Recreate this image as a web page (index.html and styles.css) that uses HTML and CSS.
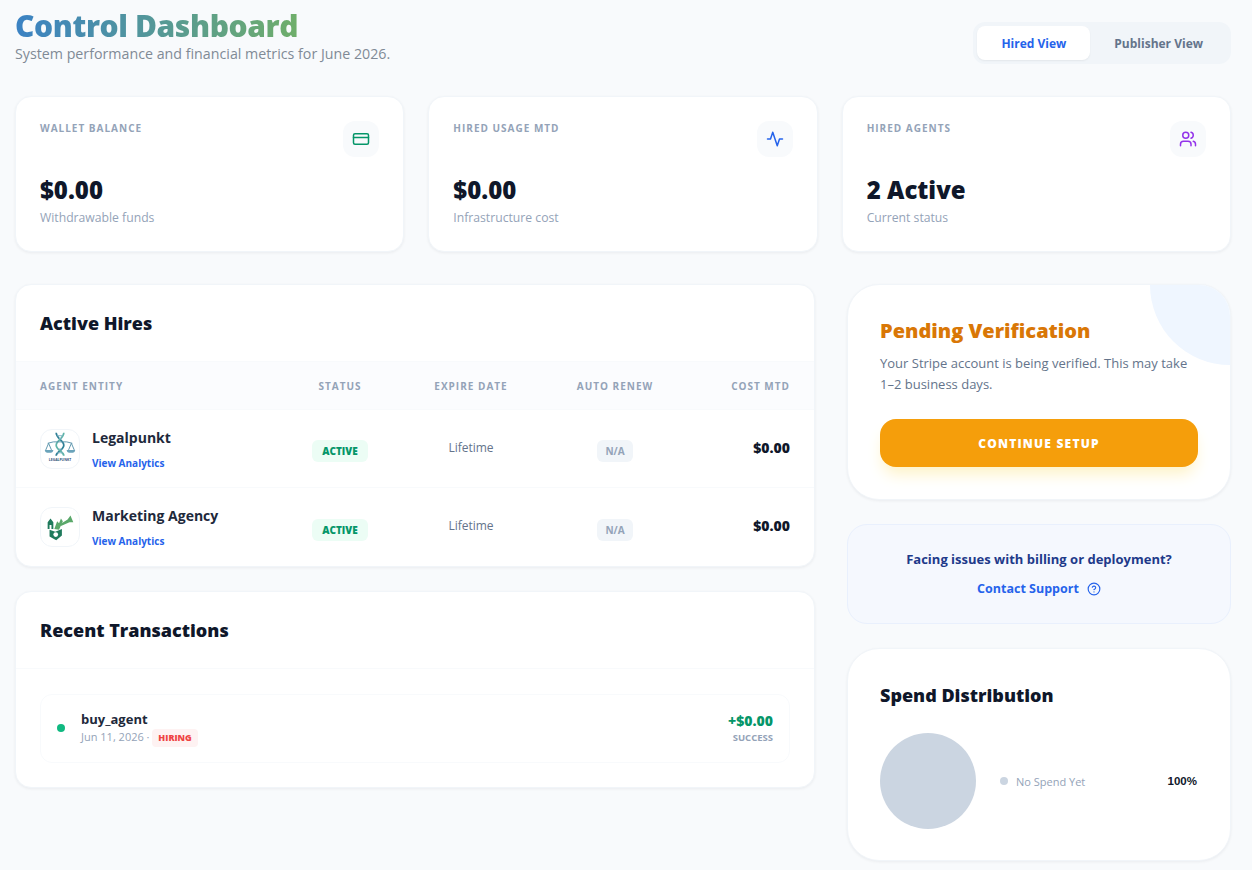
FILE: index.html
```html
<!DOCTYPE html>
<html lang="en">
  <head>
    <meta charset="UTF-8" />
    <meta name="viewport" content="width=device-width, initial-scale=1.0" />
    <title>Control Dashboard</title>
    <link rel="stylesheet" href="styles.css">
  </head>
  <body>
    <div class="page">
      <header class="top">
        <div>
          <h1 class="page-title">Control Dashboard</h1>
          <p class="page-sub">System performance and financial metrics for June 2026.</p>
        </div>
        <div class="toggle">
          <button class="toggle-btn active">Hired View</button>
          <button class="toggle-btn">Publisher View</button>
        </div>
      </header>

      <section class="stats">
        <div class="stat">
          <div class="stat-top">
            <span class="stat-label">Wallet Balance</span>
            <span class="stat-icon green">
              <svg viewBox="0 0 24 24"><rect x="2" y="5" width="20" height="14" rx="2"/><line x1="2" y1="10" x2="22" y2="10"/></svg>
            </span>
          </div>
          <div class="stat-value">$0.00</div>
          <div class="stat-sub">Withdrawable funds</div>
        </div>
        <div class="stat">
          <div class="stat-top">
            <span class="stat-label">Hired Usage MTD</span>
            <span class="stat-icon blue">
              <svg viewBox="0 0 24 24"><polyline points="22 12 18 12 15 21 9 3 6 12 2 12"/></svg>
            </span>
          </div>
          <div class="stat-value">$0.00</div>
          <div class="stat-sub">Infrastructure cost</div>
        </div>
        <div class="stat">
          <div class="stat-top">
            <span class="stat-label">Hired Agents</span>
            <span class="stat-icon purple">
              <svg viewBox="0 0 24 24"><path d="M16 21v-2a4 4 0 0 0-4-4H6a4 4 0 0 0-4 4v2"/><circle cx="9" cy="7" r="4"/><path d="M22 21v-2a4 4 0 0 0-3-3.87"/><path d="M16 3.13a4 4 0 0 1 0 7.75"/></svg>
            </span>
          </div>
          <div class="stat-value">2 Active</div>
          <div class="stat-sub">Current status</div>
        </div>
      </section>

      <div class="columns">
        <main class="left">
          <section class="panel">
            <h2 class="panel-title">Active Hires</h2>
            <table class="hires">
              <colgroup>
                <col class="col-agent"><col class="col-status"><col class="col-expire"><col class="col-renew"><col>
              </colgroup>
              <thead>
                <tr>
                  <th class="text-left">Agent Entity</th>
                  <th>Status</th>
                  <th>Expire Date</th>
                  <th>Auto Renew</th>
                  <th class="text-right">Cost MTD</th>
                </tr>
              </thead>
              <tbody>
                <tr>
                  <td>
                    <div class="agent">
                      <span class="agent-logo">
                        <svg viewBox="0 0 40 40">
                          <path class="dna-a" d="M16 3c0 6 8 8 8 13s-8 7-8 11"/>
                          <path class="dna-b" d="M24 3c0 6-8 8-8 13s8 7 8 11"/>
                          <path class="rung" d="M17 6h6M19 9h3M19 20h3M17 24h6"/>
                          <path class="beam" d="M7 14l6-1.500h14l6 1.500M8 14l-3 7M8 14l3 7M32 14l-3 7M32 14l3 7"/>
                          <path class="pan" d="M4 21a4.500 3 0 0 0 9 0zM27 21a4.500 3 0 0 0 9 0z"/>
                          <text class="logo-word" x="20" y="33">LEGALPUNKT</text>
                        </svg>
                      </span>
                      <div>
                        <div class="agent-name">Legalpunkt</div>
                        <a class="agent-link">View Analytics</a>
                      </div>
                    </div>
                  </td>
                  <td class="text-center badge-cell"><span class="badge badge-active">ACTIVE</span></td>
                  <td class="text-center expire">Lifetime</td>
                  <td class="text-center badge-cell"><span class="badge badge-na">N/A</span></td>
                  <td class="text-right cost">$0.00</td>
                </tr>
                <tr>
                  <td>
                    <div class="agent">
                      <span class="agent-logo">
                        <svg viewBox="0 0 40 40">
                          <path class="mega" d="M7 15l3-4 3 4v7h-2v-4H9v4H7z"/>
                          <path class="mega-light" d="M14 22l3-8 2 2 2-5 2 3-4 9z"/>
                          <path class="mega-light" d="M20 17l8-5 3-4 3 7-4 0-9 4z"/>
                          <path class="mega" d="M9 23l6 2 7-3v7l-6 5-7-4z"/>
                          <circle class="mega-dot" cx="15.500" cy="28" r="2.500"/>
                        </svg>
                      </span>
                      <div>
                        <div class="agent-name">Marketing Agency</div>
                        <a class="agent-link">View Analytics</a>
                      </div>
                    </div>
                  </td>
                  <td class="text-center badge-cell"><span class="badge badge-active">ACTIVE</span></td>
                  <td class="text-center expire">Lifetime</td>
                  <td class="text-center badge-cell"><span class="badge badge-na">N/A</span></td>
                  <td class="text-right cost">$0.00</td>
                </tr>
              </tbody>
            </table>
          </section>

          <section class="panel">
            <h2 class="panel-title">Recent Transactions</h2>
            <div class="tx-list">
              <div class="tx">
                <span class="tx-dot"></span>
                <div class="tx-main">
                  <div class="tx-name">buy_agent</div>
                  <div class="tx-meta">Jun 11, 2026 · <span class="tx-tag">HIRING</span></div>
                </div>
                <div class="tx-side">
                  <div class="tx-amount">+$0.00</div>
                  <div class="tx-state">SUCCESS</div>
                </div>
              </div>
            </div>
          </section>
        </main>

        <aside class="right">
          <section class="side-card pending">
            <span class="pending-circle"></span>
            <h3 class="pending-title">Pending Verification</h3>
            <p class="pending-text">Your Stripe account is being verified. This may take 1–2 business days.</p>
            <button class="setup-btn">CONTINUE SETUP</button>
          </section>

          <section class="support">
            <p class="support-text">Facing issues with billing or deployment?</p>
            <a class="support-link">Contact Support
              <svg viewBox="0 0 24 24"><circle cx="12" cy="12" r="10"/><path d="M9.090 9a3 3 0 0 1 5.830 1c0 2-3 3-3 3"/><line x1="12" y1="17" x2="12.010" y2="17"/></svg>
            </a>
          </section>

          <section class="side-card spend">
            <h3 class="spend-title">Spend Distribution</h3>
            <div class="spend-body">
              <div class="pie"></div>
              <div class="legend">
                <span class="legend-dot"></span>
                <span class="legend-name">No Spend Yet</span>
                <span class="legend-pct">100%</span>
              </div>
            </div>
          </section>
        </aside>
      </div>
    </div>
  </body>
</html>
```

FILE: styles.css
```css
* {
  box-sizing: border-box;
}

body {
  margin: 0;
  background-color: #f8fafc;
  font-family: "Open Sans", Arial, sans-serif;
  color: #0f172a;
}

.page {
  padding: 8px 21px 8px 15px;
}

/* header */
.top {
  display: flex;
  align-items: flex-end;
  justify-content: space-between;
  margin-bottom: 32px;
}
.page-title {
  display: inline-block;
  margin: 0;
  font-size: 30px;
  line-height: 36px;
  font-weight: 800;
  letter-spacing: -0.4px;
  white-space: nowrap;
  vertical-align: top;
  background: linear-gradient(90deg, #3b82c4, #6fae6a);
  background-clip: text;
  -webkit-background-clip: text;
  color: transparent;
}
.page-sub {
  margin: 0;
  font-size: 14.240px;
  line-height: 20px;
  color: #808a96;
}
.toggle {
  display: flex;
  padding: 4px;
  background-color: #f1f5f9;
  border-radius: 12px;
}
.toggle-btn {
  border: none;
  background: none;
  height: 34px;
  padding: 0 24px;
  font-family: inherit;
  font-size: 12px;
  font-weight: 700;
  color: #64748b;
  border-radius: 8px;
}
.toggle-btn.active {
  background-color: #fff;
  color: #2563eb;
  box-shadow: 0 1px 2px rgba(0, 0, 0, 0.06);
}

/* stat cards */
.stats {
  display: grid;
  grid-template-columns: repeat(3, 1fr);
  gap: 24px;
  margin-bottom: 32px;
}
.stat {
  height: 156px;
  padding: 24px;
  background-color: #fff;
  border: 1px solid #f1f5f9;
  border-radius: 16px;
  box-shadow: 0 1px 3px rgba(15, 23, 42, 0.06);
}
.stat-top {
  display: flex;
  justify-content: space-between;
  align-items: flex-start;
  height: 36px;
  margin-bottom: 17px;
}
.stat-label {
  font-size: 10px;
  line-height: 14px;
  font-weight: 700;
  letter-spacing: 1px;
  text-transform: uppercase;
  color: #94a3b8;
}
.stat-icon {
  display: flex;
  align-items: center;
  justify-content: center;
  width: 36px;
  height: 36px;
  border-radius: 12px;
  background-color: #f8fafc;
}
.stat-icon svg {
  width: 18px;
  height: 18px;
  fill: none;
  stroke: currentColor;
  stroke-width: 2;
  stroke-linecap: round;
  stroke-linejoin: round;
}
.green { color: #059669; }
.blue { color: #2563eb; }
.purple { color: #9333ea; }
.stat-value {
  font-size: 24px;
  line-height: 32px;
  font-weight: 800;
}
.stat-sub {
  margin-top: 4px;
  font-size: 12.200px;
  line-height: 16px;
  color: #94a3b8;
}

/* two columns */
.columns {
  display: grid;
  grid-template-columns: 800px 384px;
  gap: 32px;
  align-items: start;
}
.left,
.right {
  display: flex;
  flex-direction: column;
  gap: 24px;
}
.panel {
  background-color: #fff;
  border: 1px solid #f1f5f9;
  border-radius: 16px;
  box-shadow: 0 1px 3px rgba(15, 23, 42, 0.06);
  overflow: hidden;
}
.panel-title {
  margin: 0;
  height: 76px;
  padding: 0 24px;
  display: flex;
  align-items: center;
  font-size: 18px;
  font-weight: 800;
}

/* hires table */
.hires {
  width: 100%;
  border-collapse: collapse;
  table-layout: fixed;
}
.col-agent { width: 264px; }
.col-status { width: 120px; }
.col-expire { width: 142px; }
.col-renew { width: 146px; }
.hires th {
  height: 48px;
  padding: 0;
  background-color: #fbfcfe;
  border-top: 1px solid #f8fafc;
  font-size: 10px;
  font-weight: 700;
  letter-spacing: 1px;
  text-transform: uppercase;
  color: #94a3b8;
}
.hires td {
  height: 78px;
  padding: 0;
  border-top: 1px solid #f8fafc;
}
.hires th:first-child,
.hires td:first-child {
  padding-left: 24px;
}
.hires th:last-child,
.hires td:last-child {
  padding-right: 24px;
}
.text-left { text-align: left; }
.text-center { text-align: center; }
.hires .text-right { text-align: right; }
.agent {
  display: flex;
  align-items: center;
  gap: 12px;
}
.agent-logo {
  display: block;
  width: 40px;
  height: 40px;
  background-color: #fff;
  border: 1px solid #f1f5f9;
  border-radius: 12px;
  overflow: hidden;
}
.agent-logo svg {
  display: block;
  width: 38px;
  height: 38px;
}
.dna-a { fill: none; stroke: #2f7f96; stroke-width: 1.800; }
.dna-b { fill: none; stroke: #5fb3a8; stroke-width: 1.800; }
.rung { fill: none; stroke: #7fb4c4; stroke-width: 1; }
.beam { fill: none; stroke: #5a94ac; stroke-width: 1; }
.pan { fill: #6aa3ba; }
.logo-word {
  font-family: "Open Sans", Arial, sans-serif;
  font-size: 3.600px;
  font-weight: 700;
  text-anchor: middle;
  fill: #2f4f78;
}
.mega { fill: #1f7a5c; }
.mega-light { fill: #5aa86a; }
.mega-dot { fill: #fff; }
.agent-name {
  font-size: 14px;
  line-height: 20px;
  font-weight: 700;
  color: #1e293b;
}
.agent-link {
  display: block;
  margin-top: 8px;
  font-size: 10px;
  line-height: 14px;
  font-weight: 700;
  color: #2563eb;
}
.hires .badge-cell {
  padding-top: 4px;
}
.badge {
  display: inline-block;
  padding: 0 10px;
  height: 22px;
  line-height: 22px;
  border-radius: 6px;
  font-size: 10px;
  font-weight: 800;
  vertical-align: middle;
}
.badge-active {
  background-color: #ecfdf5;
  color: #059669;
}
.badge-na {
  padding: 0 8px;
  background-color: #f1f5f9;
  color: #94a3b8;
  font-weight: 700;
}
.hires .expire {
  font-size: 12px;
  color: #64748b;
  padding-bottom: 2px;
}
.hires .cost {
  font-size: 14px;
  font-weight: 800;
  padding-bottom: 2px;
}

/* transactions */
.tx-list {
  border-top: 1px solid #f8fafc;
  padding: 25px 24px 24px;
}
.tx {
  display: flex;
  align-items: center;
  height: 69px;
  padding: 0 16px;
  border: 1px solid #f8fafc;
  border-radius: 12px;
}
.tx-dot {
  width: 8px;
  height: 8px;
  border-radius: 50%;
  background-color: #10b981;
  margin-right: 16px;
}
.tx-main {
  flex: 1;
  padding-top: 1px;
}
.tx-name {
  font-size: 13px;
  line-height: 18px;
  font-weight: 700;
  color: #1e293b;
}
.tx-meta {
  font-size: 11px;
  line-height: 18px;
  color: #94a3b8;
}
.tx-tag {
  display: inline-block;
  padding: 0 6px;
  background-color: #fef2f2;
  border-radius: 4px;
  font-size: 9px;
  font-weight: 800;
  color: #ef4444;
}
.tx-side {
  text-align: right;
}
.tx-amount {
  font-size: 14px;
  line-height: 18px;
  font-weight: 800;
  color: #059669;
}
.tx-state {
  margin-top: 1px;
  font-size: 9.500px;
  line-height: 14px;
  font-weight: 700;
  color: #94a3b8;
}

/* right side */
.side-card {
  background-color: #fff;
  border: 1px solid #f1f5f9;
  border-radius: 32px;
  box-shadow: 0 1px 3px rgba(15, 23, 42, 0.06);
  padding: 32px;
}
.pending {
  position: relative;
  overflow: hidden;
  height: 216px;
}
.pending-circle {
  position: absolute;
  top: -80px;
  right: -80px;
  width: 160px;
  height: 160px;
  border-radius: 50%;
  background-color: #eff6ff;
}
.pending-title {
  position: relative;
  margin: 0 0 8px;
  font-size: 20px;
  line-height: 28px;
  font-weight: 800;
  color: #d97706;
}
.pending-text {
  position: relative;
  margin: 0 0 24px;
  font-size: 13px;
  line-height: 21px;
  color: #64748b;
}
.setup-btn {
  display: block;
  width: 100%;
  height: 48px;
  border: none;
  border-radius: 16px;
  background-color: #f59e0b;
  color: #fff;
  font-family: inherit;
  font-size: 12px;
  font-weight: 800;
  letter-spacing: 1.200px;
  box-shadow: 0 10px 15px -3px #fef3c7;
}
.support {
  height: 100px;
  padding: 25px 24px 0;
  text-align: center;
  background-color: #f5f8fe;
  border: 1px solid #e9f0fd;
  border-radius: 20px;
}
.support-text {
  margin: 0 0 8px;
  font-size: 13px;
  line-height: 18px;
  font-weight: 700;
  color: #1e3a8a;
}
.support-link {
  display: inline-flex;
  align-items: center;
  gap: 8px;
  font-size: 12.500px;
  line-height: 18px;
  font-weight: 700;
  color: #2563eb;
}
.support-link svg {
  width: 14px;
  height: 14px;
  fill: none;
  stroke: currentColor;
  stroke-width: 2;
  stroke-linecap: round;
  stroke-linejoin: round;
}
.spend {
  height: 213px;
}
.spend-title {
  margin: 0 0 24px;
  font-size: 18px;
  line-height: 28px;
  font-weight: 800;
}
.spend-body {
  display: flex;
  align-items: center;
  gap: 24px;
}
.pie {
  flex: none;
  width: 96px;
  height: 96px;
  border-radius: 50%;
  background-color: #cbd5e1;
}
.legend {
  flex: 1;
  display: flex;
  align-items: center;
}
.legend-dot {
  width: 8px;
  height: 8px;
  border-radius: 50%;
  background-color: #cbd5e1;
  margin-right: 8px;
}
.legend-name {
  flex: 1;
  font-size: 11px;
  color: #94a3b8;
}
.legend-pct {
  padding-right: 1px;
  font-family: "Liberation Sans", Arial, sans-serif;
  font-size: 11.500px;
  font-weight: 700;
}
```
